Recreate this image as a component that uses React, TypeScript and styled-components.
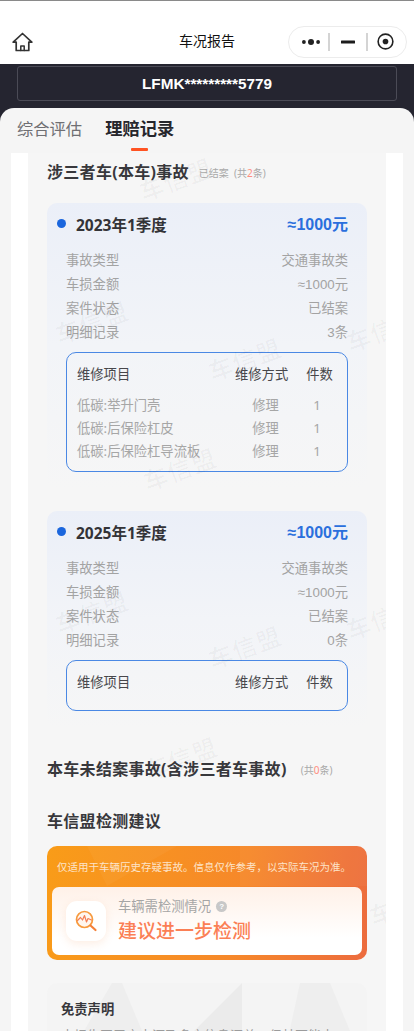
import React from "react";
import styled, { createGlobalStyle } from "styled-components";

const Global = createGlobalStyle`
  html, body { margin: 0; padding: 0; height: 1031px; overflow: hidden; background: #fff; }
  #root { height: 1031px; overflow: hidden; }
  * { box-sizing: border-box; }
  body { font-family: "Noto Sans", "Noto Sans CJK SC", sans-serif; }
`;

const Page = styled.div`
  width: 414px; height: 1031px; overflow: hidden;
  background: #252530; display: flex; flex-direction: column;
`;
const NavBar = styled.header`
  height: 64px; background: #fff; border-top: 1px solid #8a8a8a;
  padding: 25px 7px 7px 12px; display: flex; align-items: center; justify-content: space-between;
  position: relative; flex: none;
`;
const NavTitle = styled.div`
  position: absolute; left: 0; right: 0; top: 30px; text-align: center;
  font-size: 14px; line-height: 20px; color: #111;
`;
const Capsule = styled.div`
  width: 119px; height: 32px; border: 1px solid #ececec; border-radius: 16px; background: #fff;
  display: flex; align-items: center; padding: 0 0 0 13px;
`;
const CapDivider = styled.span<{ $l: number; $r: number }>`
  width: 2px; height: 18px; background: #d4d4d4; margin: 0 ${p => p.$r}px 0 ${p => p.$l}px;
`;
const VinWrap = styled.div`
  height: 44px; padding: 2px 17px 7px; flex: none;
`;
const VinBox = styled.div`
  height: 35px; border: 1px solid #4b4b56; border-radius: 3px;
  display: flex; align-items: center; justify-content: center;
  color: #fff; font: 700 15.3px/20px "Liberation Sans", "Noto Sans", sans-serif;
`;
const Sheet = styled.main`
  flex: 1; background: #f5f5f5; border-radius: 14px 14px 0 0; display: flex; flex-direction: column; min-height: 0;
`;
const Tabs = styled.nav`
  height: 45px; padding: 7px 0 0 17px; display: flex; gap: 23px; flex: none;
`;
const Tab = styled.div<{ $active?: boolean }>`
  position: relative; height: 28px;
  font-size: ${p => (p.$active ? "17.3px" : "16.3px")}; line-height: 28px;
  font-weight: ${p => (p.$active ? 700 : 400)};
  color: ${p => (p.$active ? "#26262c" : "#6f6f73")};
  ${p => p.$active && `&::after {
    content: ""; position: absolute; left: 26px; top: 33px; width: 17px; height: 3px;
    background: #ff5322; border-radius: 1px;
  }`}
`;
const Strip = styled.div`
  flex: 1; margin: 0 11px; padding: 0 17px; background: #fff; min-height: 0;
`;
const Content = styled.div`
  position: relative; height: 100%; background: #f6f6f6; padding: 7px 19px 0; overflow: hidden;
`;
const Watermark = styled.span<{ $x: number; $y: number }>`
  position: absolute; left: ${p => p.$x}px; top: ${p => p.$y}px; z-index: 3; pointer-events: none;
  transform: translate(-50%, -50%) rotate(-20deg);
  font-size: 24.5px; line-height: 30px; font-weight: 700; letter-spacing: 1px; color: rgba(0, 0, 0, 0.026); white-space: nowrap;
`;
const SectionRow = styled.div<{ $mt?: number; $gap?: number }>`
  display: flex; align-items: center; height: 24px; gap: ${p => p.$gap ?? 10}px; margin-top: ${p => p.$mt ?? 0}px;
`;
const SectionTitle = styled.h2`
  margin: 0; font-size: 16px; line-height: 24px; font-weight: 700; color: #38383c; letter-spacing: 0.3px; white-space: nowrap;
`;
const Meta = styled.span`
  font-size: 10px; line-height: 14px; color: #a9a9a9; white-space: pre; margin-top: 2px;
`;
const Hot = styled.span`
  color: #ff8d80;
`;
const Card = styled.section<{ $mt: number }>`
  margin-top: ${p => p.$mt}px; padding: 10px 0 18px; border-radius: 10px;
  background: linear-gradient(180deg, #ebeff8 0%, #f2f4f8 50%, #f6f6f6 100%);
`;
const CardHead = styled.div`
  height: 24px; display: flex; align-items: center; padding: 0 19px 0 10px; margin-bottom: 10px;
`;
const Dot = styled.span`
  width: 9px; height: 9px; border-radius: 50%; background: #1b66dd; margin: -3px 10px 0 0; flex: none;
`;
const Quarter = styled.h3`
  margin: 0; flex: 1; font-size: 15.5px; line-height: 24px; font-weight: 700; color: #333337;
`;
const Amount = styled.span`
  font-family: "Liberation Sans", "Noto Sans CJK SC", sans-serif;
  font-size: 16px; line-height: 24px; font-weight: 700; color: #2a6fdd;
`;
const InfoRow = styled.div`
  height: 24px; display: flex; justify-content: space-between; align-items: center; padding: 0 19px 0 19px;
  font-family: "Liberation Sans", "Noto Sans CJK SC", sans-serif;
  font-size: 13.3px; color: #a3a3a3;
`;
const RepairTable = styled.div`
  margin: 9px 19px 0; border: 1px solid #4a88e4; border-radius: 10px; padding: 9px 14px 9px 10px; min-height: 51px;
`;
const TableRow = styled.div<{ $head?: boolean }>`
  display: grid; grid-template-columns: 1fr 53px 27px; column-gap: 18px; align-items: center;
  height: ${p => (p.$head ? 22 : 23)}px; font-size: 13.3px;
  color: ${p => (p.$head ? "#47474b" : "#a6a6a6")};
  margin-bottom: ${p => (p.$head ? 9 : 0)}px;
  white-space: nowrap;
  & > :nth-child(n + 2) { text-align: center; }
  & > :nth-child(2) { padding-left: ${p => (p.$head ? 0 : 8)}px; }
  & > :nth-child(3) { padding-right: ${p => (p.$head ? 0 : 5)}px; }
`;
const Advice = styled.section`
  position: relative; margin-top: 13px; height: 114px; border-radius: 10px; padding: 11px 5px 5px;
  background: linear-gradient(100deg, #f99c18 0%, #f6882a 60%, #ec6b3e 100%); overflow: hidden;
`;
const AdviceArt = styled.svg`
  position: absolute; left: 0; top: 0; width: 320px; height: 114px;
`;
const AdviceNote = styled.p`
  position: relative; margin: 0 0 0 5px; font-size: 10.5px; line-height: 20px; color: #fde3c8; white-space: nowrap; height: 30px;
`;
const AdviceBody = styled.div`
  position: relative; height: 68px; border-radius: 7px; background: linear-gradient(180deg, #fff1e8 0%, #fff 75%);
  display: flex; align-items: center; padding: 0 14px; gap: 12px;
`;
const IconTile = styled.div`
  width: 40px; height: 40px; border-radius: 11px; background: #fff;
  box-shadow: 0 3px 8px rgba(240, 150, 90, 0.16);
  display: flex; align-items: center; justify-content: center; flex: none;
`;
const AdviceText = styled.div`
  display: flex; flex-direction: column;
`;
const AdviceLabel = styled.div`
  display: flex; align-items: center; gap: 5px; font-size: 13.3px; line-height: 20px; color: #a5a5a5;
`;
const Help = styled.span`
  width: 11px; height: 11px; border-radius: 50%; background: #c8c8c8; color: #fff;
  font: 700 8px/11px "Liberation Sans", sans-serif; text-align: center;
`;
const AdviceBig = styled.div`
  font-size: 19px; line-height: 30px; font-weight: 500; color: #fb7f55; white-space: nowrap;
`;
const Disclaimer = styled.section`
  position: relative; margin-top: 23px; height: 120px; border-radius: 10px; background: #f4f4f4; overflow: hidden; padding: 16px 14px;
`;
const DisclaimerArt = styled.svg`
  position: absolute; left: 0; top: 0; width: 320px; height: 60px;
`;
const DisclaimerTitle = styled.h3`
  position: relative; margin: 0; font-size: 13.3px; line-height: 20px; font-weight: 700; color: #38383c;
`;
const DisclaimerText = styled.p`
  position: relative; margin: 6px 0 0; font-size: 13px; line-height: 20px; color: #9c9c9c; white-space: nowrap;
`;

const HomeIcon = () => (
  <svg width="21" height="20" viewBox="0 0 21 20" fill="none" stroke="#333" strokeWidth="1.7" strokeLinejoin="round" strokeLinecap="round">
    <path d="M1.2 10.2 10.5 1.5l9.3 8.7h-3v8.3H4.2v-8.3z" />
    <path d="M8.8 18.5v-4.6h3.4v4.6" strokeWidth="1.5" />
  </svg>
);
const MoreIcon = () => (
  <svg width="18" height="8" viewBox="0 0 18 8" fill="#222">
    <circle cx="1.9" cy="4" r="1.9" /><circle cx="9" cy="4" r="3" /><circle cx="16.1" cy="4" r="1.9" />
  </svg>
);
const MinIcon = () => (
  <svg width="14" height="4" viewBox="0 0 14 4"><rect x="0" y="0.5" width="14" height="3" fill="#1c1c1c" rx="0.5" /></svg>
);
const CloseIcon = () => (
  <svg width="17" height="17" viewBox="0 0 18 18" fill="none">
    <circle cx="9" cy="9" r="7.8" stroke="#222" strokeWidth="1.7" /><circle cx="9" cy="9" r="3" fill="#222" />
  </svg>
);
const ScopeIcon = () => (
  <svg width="24" height="24" viewBox="0 0 24 24" fill="none">
    <circle cx="10.5" cy="10.5" r="8" stroke="#f79a3e" strokeWidth="1.7" fill="#fff6ee" />
    <path d="M3.5 11.5 6.5 8.5 8.5 11 10.5 6.5 12.5 13 14 9.5 17.5 11" stroke="#f47f55" strokeWidth="1.2" strokeLinejoin="round" strokeLinecap="round" />
    <path d="M16.5 16.5 21.5 21" stroke="#f4803a" strokeWidth="2.2" strokeLinecap="round" />
  </svg>
);

type Item = [string, string, string];
const ClaimCard = ({ mt, quarter, count, items }: { mt: number; quarter: string; count: string; items: Item[] }) => (
  <Card $mt={mt}>
    <CardHead>
      <Dot />
      <Quarter>{quarter}</Quarter>
      <Amount>≈1000元</Amount>
    </CardHead>
    <InfoRow><span>事故类型</span><span>交通事故类</span></InfoRow>
    <InfoRow><span>车损金额</span><span>≈1000元</span></InfoRow>
    <InfoRow><span>案件状态</span><span>已结案</span></InfoRow>
    <InfoRow><span>明细记录</span><span>{count}</span></InfoRow>
    <RepairTable>
      <TableRow $head><span>维修项目</span><span>维修方式</span><span>件数</span></TableRow>
      {items.map(i => (
        <TableRow key={i[0]}><span>{i[0]}</span><span>{i[1]}</span><span>{i[2]}</span></TableRow>
      ))}
    </RepairTable>
  </Card>
);

const marks: [number, number][] = [
  [148, 27], [64, 170], [217, 207], [152, 317], [64, 460], [217, 495], [153, 606],
  [355, 178], [355, 466], [378, 752],
];

export default function App() {
  return (
    <Page>
      <Global />
      <NavBar>
        <HomeIcon />
        <NavTitle>车况报告</NavTitle>
        <Capsule>
          <MoreIcon /><CapDivider $l={8} $r={11} /><MinIcon /><CapDivider $l={11} $r={9} /><CloseIcon />
        </Capsule>
      </NavBar>
      <VinWrap><VinBox>LFMK*********5779</VinBox></VinWrap>
      <Sheet>
        <Tabs>
          <Tab>综合评估</Tab>
          <Tab $active>理赔记录</Tab>
        </Tabs>
        <Strip>
          <Content>
            <SectionRow>
              <SectionTitle>涉三者车(本车)事故</SectionTitle>
              <Meta>已结案  (共<Hot>2</Hot>条)</Meta>
            </SectionRow>
            <ClaimCard mt={19} quarter="2023年1季度" count="3条" items={[
              ["低碳:举升门壳", "修理", "1"],
              ["低碳:后保险杠皮", "修理", "1"],
              ["低碳:后保险杠导流板", "修理", "1"],
            ]} />
            <ClaimCard mt={21} quarter="2025年1季度" count="0条" items={[]} />
            <SectionRow $mt={28} $gap={14}>
              <SectionTitle>本车未结案事故(含涉三者车事故)</SectionTitle>
              <Meta>(共<Hot>0</Hot>条)</Meta>
            </SectionRow>
            <SectionRow $mt={28}>
              <SectionTitle>车信盟检测建议</SectionTitle>
            </SectionRow>
            <Advice>
              <AdviceArt viewBox="0 0 320 114">
                <polygon points="40,0 130,0 60,40" fill="rgba(255,255,255,0.04)" />
                <polygon points="193,0 320,0 320,40 193,40" fill="rgba(255,255,255,0.035)" />
              </AdviceArt>
              <AdviceNote>仅适用于车辆历史存疑事故。信息仅作参考，以实际车况为准。</AdviceNote>
              <AdviceBody>
                <IconTile><ScopeIcon /></IconTile>
                <AdviceText>
                  <AdviceLabel>车辆需检测情况<Help>?</Help></AdviceLabel>
                  <AdviceBig>建议进一步检测</AdviceBig>
                </AdviceText>
              </AdviceBody>
            </Advice>
            <Disclaimer>
              <DisclaimerArt viewBox="0 0 320 60">
                <polygon points="65,0 75,0 100,60 30,60" fill="#eeeeee" />
                <polygon points="195,0 195,60 135,60" fill="#ebebeb" />
                <polygon points="253,0 283,0 308,60 240,60" fill="#eeeeee" />
              </DisclaimerArt>
              <DisclaimerTitle>免责声明</DisclaimerTitle>
              <DisclaimerText>本报告同三方来源及多方信息汇总，但其不能十</DisclaimerText>
            </Disclaimer>
            {marks.map(([x, y]) => <Watermark key={`${x}-${y}`} $x={x} $y={y}>车信盟</Watermark>)}
          </Content>
        </Strip>
      </Sheet>
    </Page>
  );
}
